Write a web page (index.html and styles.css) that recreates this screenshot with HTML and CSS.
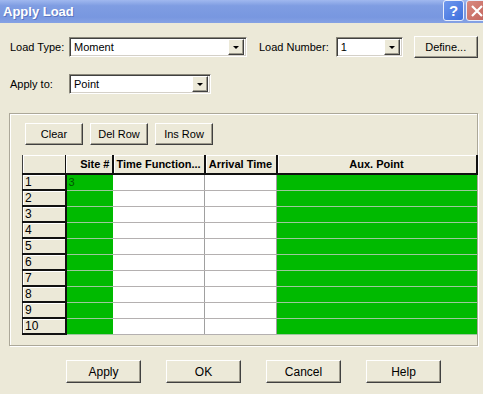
FILE: index.html
```html
<!DOCTYPE html>
<html lang="en">
<head>
    <meta charset="UTF-8">
    <title>Apply Load</title>
    <link rel="stylesheet" href="styles.css">
</head>
<body>

<div class="titlebar">
    <span class="title">Apply Load</span>
    <span class="tb-btn help">?</span>
    <span class="tb-btn close">
        <svg width="14" height="14" viewBox="0 0 14 14"><path d="M2 2 L12 12 M12 2 L2 12" stroke="#fff" stroke-width="2.2"/></svg>
    </span>
</div>

<div class="row row1">
    <span class="label">Load Type:</span>
    <div class="combo combo-type"><span>Moment</span><i class="arrow"></i></div>
    <span class="label label-num">Load Number:</span>
    <div class="combo combo-num"><span>1</span><i class="arrow"></i></div>
    <button class="btn btn-define">Define...</button>
</div>

<div class="row row2">
    <span class="label">Apply to:</span>
    <div class="combo combo-apply"><span>Point</span><i class="arrow"></i></div>
</div>

<div class="group">
    <div class="tools">
        <button class="btn btn-small">Clear</button>
        <button class="btn btn-small">Del Row</button>
        <button class="btn btn-small">Ins Row</button>
    </div>

    <table class="grid">
        <colgroup>
            <col style="width:43px">
            <col style="width:47px">
            <col style="width:92px">
            <col style="width:72px">
            <col style="width:200px">
        </colgroup>
        <tr class="head">
            <th class="corner"></th>
            <th class="right">Site #</th>
            <th>Time Function...</th>
            <th>Arrival Time</th>
            <th>Aux. Point</th>
        </tr>
        <tr><th class="rowh">1</th><td class="green">3</td><td></td><td></td><td class="green"></td></tr>
        <tr><th class="rowh">2</th><td class="green"></td><td></td><td></td><td class="green"></td></tr>
        <tr><th class="rowh">3</th><td class="green"></td><td></td><td></td><td class="green"></td></tr>
        <tr><th class="rowh">4</th><td class="green"></td><td></td><td></td><td class="green"></td></tr>
        <tr><th class="rowh">5</th><td class="green"></td><td></td><td></td><td class="green"></td></tr>
        <tr><th class="rowh">6</th><td class="green"></td><td></td><td></td><td class="green"></td></tr>
        <tr><th class="rowh">7</th><td class="green"></td><td></td><td></td><td class="green"></td></tr>
        <tr><th class="rowh">8</th><td class="green"></td><td></td><td></td><td class="green"></td></tr>
        <tr><th class="rowh">9</th><td class="green"></td><td></td><td></td><td class="green"></td></tr>
        <tr><th class="rowh">10</th><td class="green"></td><td></td><td></td><td class="green"></td></tr>
    </table>
</div>

<div class="footer">
    <button class="btn btn-foot">Apply</button>
    <button class="btn btn-foot">OK</button>
    <button class="btn btn-foot">Cancel</button>
    <button class="btn btn-foot">Help</button>
</div>

</body>
</html>
```

FILE: styles.css
```css
body {
    margin: 0;
    width: 483px;
    height: 394px;
    overflow: hidden;
    background-color: #ece9d8;
    font-family: "Liberation Sans", Arial, sans-serif;
    font-size: 11px;
    color: #000;
}
.titlebar {
    height: 23px;
    display: flex;
    align-items: center;
    background: linear-gradient(#a0b8ef, #7f9de2 25%, #7897e0 75%, #86a2e4);
}
.title {
    flex: 1;
    padding-left: 3px;
    color: #fff;
    font-weight: bold;
    font-size: 13px;
    text-shadow: 1px 1px 0 #5a75c0;
}
.tb-btn {
    width: 19px;
    height: 19px;
    border: 1px solid #e8eefc;
    border-radius: 3px;
    display: flex;
    align-items: center;
    justify-content: center;
    color: #fff;
    font-weight: bold;
    font-size: 15px;
    margin-bottom: 2px;
}
.help {
    background: linear-gradient(135deg, #6f98ee, #3e6fdc);
    margin-right: 2px;
}
.close {
    background: linear-gradient(135deg, #d98a80, #c2645c);
    margin-right: -4px;
}
.row {
    display: flex;
    align-items: center;
}
.row1 {
    margin-top: 13px;
    height: 22px;
}
.row2 {
    margin-top: 15px;
    height: 22px;
}
.label {
    width: 59px;
    padding-left: 10px;
}
.label-num {
    width: auto;
    padding-left: 12px;
    margin-right: 7px;
}
.combo {
    height: 20px;
    box-sizing: border-box;
    background: #fff;
    border: 1px solid;
    border-color: #8a877a #fff #fff #8a877a;
    box-shadow: inset 1px 1px 0 #404040, inset -1px -1px 0 #d4d0c8;
    display: flex;
    align-items: center;
    padding: 2px;
}
.combo span {
    flex: 1;
    padding-left: 2px;
}
.combo-type {
    width: 178px;
}
.combo-num {
    width: 67px;
}
.combo-apply {
    width: 142px;
}
.arrow {
    width: 16px;
    height: 16px;
    box-sizing: border-box;
    background: #ece9d8;
    border: 1px solid;
    border-color: #fff #404040 #404040 #fff;
    box-shadow: inset -1px -1px 0 #9d9a8c;
    position: relative;
}
.arrow::after {
    content: "";
    position: absolute;
    left: 4px;
    top: 6px;
    border-left: 3px solid transparent;
    border-right: 3px solid transparent;
    border-top: 3px solid #000;
}
.btn {
    font-family: "Liberation Sans", Arial, sans-serif;
    font-size: 11px;
    color: #000;
    background: #ece9d8;
    border: 1px solid;
    border-color: #fff #404040 #404040 #fff;
    box-shadow: inset -1px -1px 0 #9d9a8c;
    padding: 0;
    box-sizing: border-box;
}
.btn-define {
    margin-left: 11px;
    width: 64px;
    height: 22px;
}
.group {
    margin: 18px 0 0 9px;
    width: 469px;
    box-sizing: border-box;
    border: 1px solid #aca899;
    box-shadow: inset 1px 1px 0 #fff, 1px 1px 0 #fff;
    padding: 9px 0 10px 12px;
}
.tools {
    display: flex;
    gap: 7px;
    margin-left: 3px;
}
.btn-small {
    width: 58px;
    height: 22px;
}
.grid {
    margin-top: 10px;
    border-collapse: collapse;
    table-layout: fixed;
    width: 454px;
    border-left: 1px solid #404040;
}
.grid td, .grid th {
    padding: 0 2px;
    height: 16px;
    box-sizing: border-box;
    background: #fff;
    border-bottom: 1px solid #b4b0b0;
    border-right: 1px solid #a0a0a0;
    text-align: left;
    font-weight: normal;
    white-space: nowrap;
    overflow: hidden;
}
.grid .head th {
    height: 19px;
    background: #ece9d8;
    font-weight: bold;
    text-align: center;
    font-size: 11px;
    border-right: 2px solid #111;
    border-bottom: 2px solid #111;
    box-shadow: inset 1px 1px 0 #fff;
}
.grid .head th.right {
    text-align: right;
}
.grid .head th.corner {
    border-right: 1px solid #111;
}
.grid th.rowh {
    background: #ece9d8;
    border-right: 2px solid #111;
    border-bottom: 2px solid #111;
    box-shadow: inset 1px 1px 0 #fff;
    font-size: 12px;
}
.grid td.green {
    background: #00ba00;
    color: #005500;
    border-bottom-color: #9cc89c;
    border-right-color: #00ba00;
}
.footer {
    display: flex;
    gap: 25px;
    margin: 14px 0 0 66px;
}
.btn-foot {
    width: 75px;
    height: 23px;
    font-size: 12px;
}
```
